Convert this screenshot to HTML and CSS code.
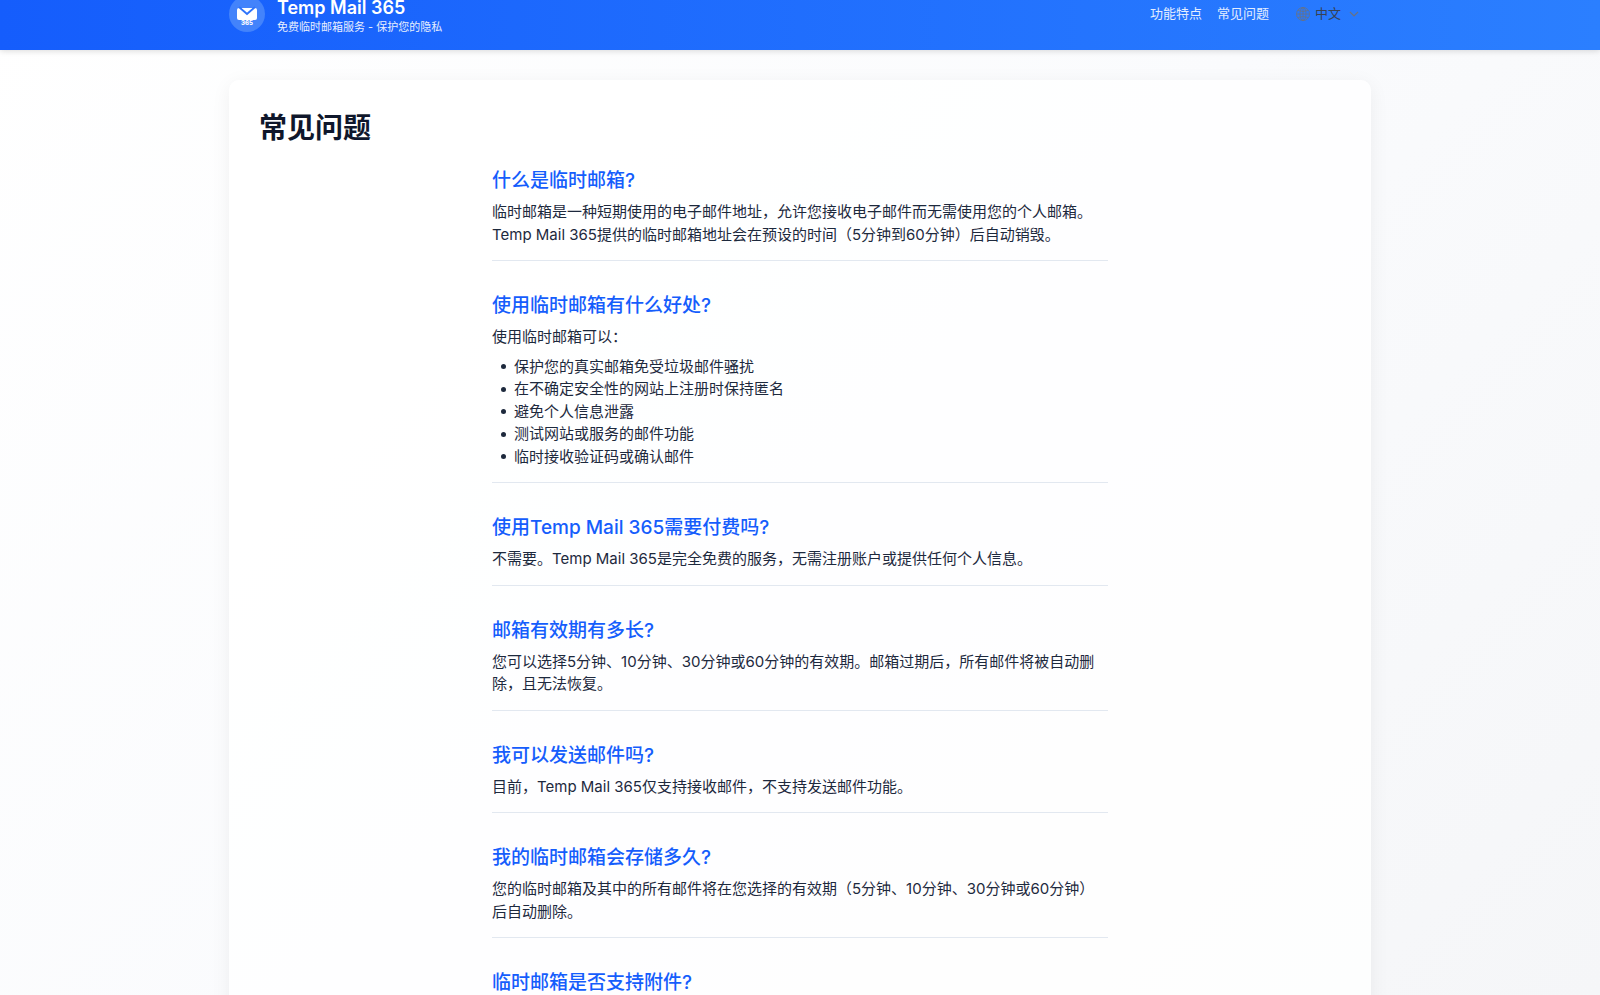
FILE: index.html
```html
<!DOCTYPE html>
<html lang="zh-CN">
<head>
	<meta charset="utf-8">
	<title>常见问题 - Temp Mail 365</title>
	<link rel="stylesheet" href="styles.css">
</head>
<body>
	<header class="header">
		<div class="header-inner">
			<a class="brand" href="#">
				<!-- logo: envelope on a round badge -->
				<svg class="logo" viewBox="0 0 36 36" width="36" height="36" aria-hidden="true">
					<circle cx="18" cy="18" r="18" fill="#4383fb"/>
					<rect x="8" y="12" width="20" height="12" rx="2" fill="#fff"/>
					<path d="M10 11 L18 18 L26 11" fill="none" stroke="#2f74fb" stroke-width="2"/>
					<path d="M13 12 h10 l-5 4 z" fill="#fff"/>
					<text class="logo-text" x="18" y="29" text-anchor="middle">365</text>
				</svg>
				<span class="brand-text">
					<span class="brand-name">Temp Mail 365</span>
					<span class="brand-tagline">免费临时邮箱服务 - 保护您的隐私</span>
				</span>
			</a>
			<nav class="nav">
				<a href="#">功能特点</a>
				<a href="#">常见问题</a>
				<button class="lang" type="button">
					<svg viewBox="0 0 14 14" width="14" height="14" fill="none" stroke="currentColor" stroke-width=".8" aria-hidden="true">
						<circle cx="7" cy="7" r="6.500"/>
						<ellipse cx="7" cy="7" rx="3" ry="6.500"/>
						<path d="M7 .5v13M.5 7h13M2 3.500q5 2 10 0M2 10.500q5-2 10 0"/>
					</svg>
					<span class="lang-name">中文</span>
					<svg viewBox="0 0 10 6" width="10" height="6" fill="none" stroke="currentColor" stroke-width="1.200" aria-hidden="true">
						<path d="M1 1l4 4 4-4"/>
					</svg>
				</button>
			</nav>
		</div>
	</header>

	<main class="card">
		<h1>常见问题</h1>
		<div class="faq">
			<section class="faq-item">
				<h2>什么是临时邮箱?</h2>
				<p>临时邮箱是一种短期使用的电子邮件地址，允许您接收电子邮件而无需使用您的个人邮箱。Temp Mail 365提供的临时邮箱地址会在预设的时间（5分钟到60分钟）后自动销毁。</p>
			</section>
			<section class="faq-item">
				<h2>使用临时邮箱有什么好处?</h2>
				<p>使用临时邮箱可以：</p>
				<ul>
					<li>保护您的真实邮箱免受垃圾邮件骚扰</li>
					<li>在不确定安全性的网站上注册时保持匿名</li>
					<li>避免个人信息泄露</li>
					<li>测试网站或服务的邮件功能</li>
					<li>临时接收验证码或确认邮件</li>
				</ul>
			</section>
			<section class="faq-item">
				<h2>使用Temp Mail 365需要付费吗?</h2>
				<p>不需要。Temp Mail 365是完全免费的服务，无需注册账户或提供任何个人信息。</p>
			</section>
			<section class="faq-item">
				<h2>邮箱有效期有多长?</h2>
				<p>您可以选择5分钟、10分钟、30分钟或60分钟的有效期。邮箱过期后，所有邮件将被自动删除，且无法恢复。</p>
			</section>
			<section class="faq-item">
				<h2>我可以发送邮件吗?</h2>
				<p>目前，Temp Mail 365仅支持接收邮件，不支持发送邮件功能。</p>
			</section>
			<section class="faq-item">
				<h2>我的临时邮箱会存储多久?</h2>
				<p>您的临时邮箱及其中的所有邮件将在您选择的有效期（5分钟、10分钟、30分钟或60分钟）后自动删除。</p>
			</section>
			<section class="faq-item">
				<h2>临时邮箱是否支持附件?</h2>
			</section>
		</div>
	</main>
</body>
</html>
```

FILE: styles.css
```css
* {
	box-sizing: border-box;
}
body {
	margin: 0;
	height: 100vh;
	overflow: hidden;
	font-family: Inter, "Noto Sans CJK SC", sans-serif;
	font-size: 15px;
	line-height: 1.5;
	color: #1d293d;
	background: linear-gradient(135deg, #ffffff 0%, #fafbfd 50%, #f5f6f8 100%);
}
h1, h2, p, ul {
	margin: 0;
}
a {
	color: inherit;
	text-decoration: none;
}

.header {
	margin-top: -22px;
	padding: 14px 20px;
	background: linear-gradient(90deg, #155dfc, #2b7fff);
	box-shadow: 0 1px 6px rgba(0, 0, 0, 0.15);
}
.header-inner {
	display: flex;
	justify-content: space-between;
	align-items: center;
	max-width: 1142px;
	margin: 0 auto;
	color: #fff;
}
.brand {
	display: flex;
	align-items: center;
	gap: 12px;
}
.logo-text {
	font-size: 6px;
	font-weight: 800;
	fill: #fff;
}
.brand-text {
	display: flex;
	flex-direction: column;
	padding-top: 6px;
}
.brand-name {
	font-size: 18px;
	font-weight: 600;
	line-height: 20px;
}
.brand-tagline {
	font-size: 11px;
	line-height: 18px;
	opacity: 0.9;
}
.nav {
	display: flex;
	align-items: center;
	gap: 15px;
	padding-right: 12px;
	font-size: 13px;
	color: #e3edff;
}
.lang {
	display: flex;
	align-items: center;
	gap: 5px;
	margin-left: 12px;
	padding: 0;
	border: 0;
	background: none;
	font: inherit;
	color: #6a7282;
}
.lang-name {
	color: #364153;
	margin-right: 3px;
}

.card {
	max-width: 1142px;
	margin: 30px auto;
	padding: 30px;
	border-radius: 10px;
	background: rgba(255, 255, 255, 0.8);
	box-shadow: 0 4px 20px rgba(0, 0, 0, 0.06);
}
h1 {
	margin-bottom: 21px;
	font-size: 28px;
	font-weight: 600;
	line-height: 36px;
	color: #0f172b;
}
.faq {
	max-width: 616px;
	margin: 0 auto;
}
.faq-item {
	margin-bottom: 31px;
	padding-bottom: 14px;
	border-bottom: 1px solid #e2e8f0;
}
h2 {
	margin-bottom: 6px;
	font-size: 19px;
	font-weight: 500;
	line-height: 28px;
	color: #155dfc;
}
.faq ul {
	margin-top: 7px;
	padding-left: 9px;
	list-style: none;
}
.faq li {
	display: flex;
	align-items: center;
	gap: 8px;
}
.faq li::before {
	content: "";
	width: 5px;
	height: 5px;
	border-radius: 50%;
	background: #1d293d;
}
```
